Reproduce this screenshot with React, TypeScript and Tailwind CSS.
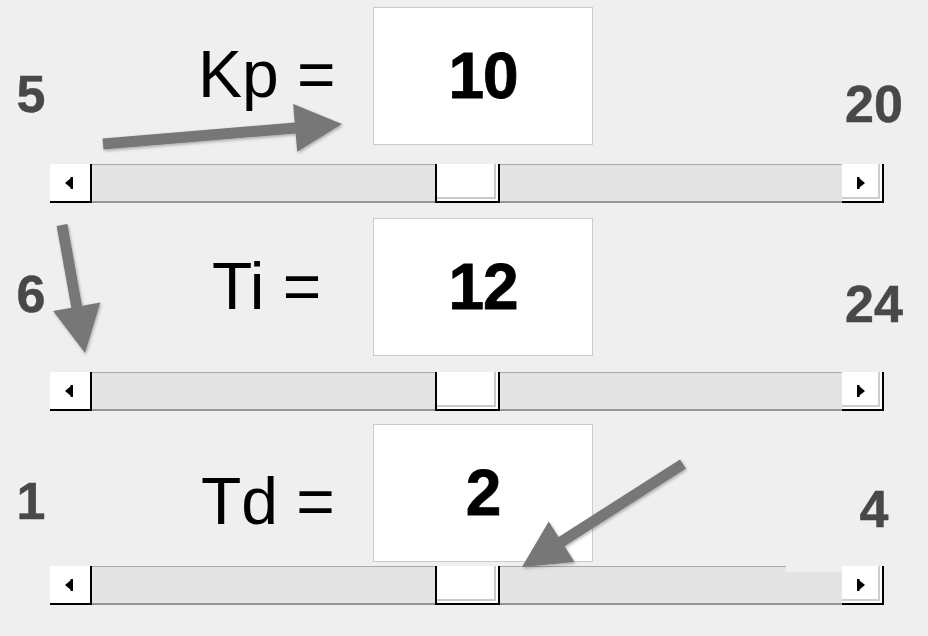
import React from "react";

// ─── Data ────────────────────────────────────────────────────────────────────

const ROWS = [
  {
    min: "5",
    max: "20",
    label: "Kp =",
    value: "10",
    rowCls: "pt-[7px]",
    labelCls: "mt-[34px] pl-[136px]",
    minCls: "mt-[61px]",
    maxCls: "mt-[71px]",
    sliderCls: "mt-[19px]",
    patch: false,
  },
  {
    min: "6",
    max: "24",
    label: "Ti =",
    value: "12",
    rowCls: "mt-[15px]",
    labelCls: "mt-[35px] pl-[150px]",
    minCls: "mt-[50px]",
    maxCls: "mt-[60px]",
    sliderCls: "mt-[16px]",
    patch: false,
  },
  {
    min: "1",
    max: "4",
    label: "Td =",
    value: "2",
    rowCls: "mt-[13px]",
    labelCls: "mt-[44px] pl-[139px]",
    minCls: "mt-[51px]",
    maxCls: "mt-[59px]",
    sliderCls: "mt-[4px]",
    patch: true,
  },
];

// annotation arrows: start point, tip point
const ARROWS = [
  { sx: 103, sy: 144, tx: 342, ty: 124 },
  { sx: 62, sy: 225, tx: 85, ty: 353 },
  { sx: 683, sy: 464, tx: 522, ty: 567 },
];

function arrowPoints(
  sx: number,
  sy: number,
  tx: number,
  ty: number,
  shaft = 11,
  headLen = 47,
  headHalf = 24
) {
  const len = Math.hypot(tx - sx, ty - sy);
  const ux = (tx - sx) / len;
  const uy = (ty - sy) / len;
  const nx = -uy;
  const ny = ux;
  const bx = tx - ux * headLen;
  const by = ty - uy * headLen;
  const w = shaft / 2;
  const pts = [
    [sx + nx * w, sy + ny * w],
    [bx + nx * w, by + ny * w],
    [bx + nx * headHalf, by + ny * headHalf],
    [tx, ty],
    [bx - nx * headHalf, by - ny * headHalf],
    [bx - nx * w, by - ny * w],
    [sx - nx * w, sy - ny * w],
  ];
  return pts.map((p) => `${p[0].toFixed(1)},${p[1].toFixed(1)}`).join(" ");
}

// ─── Slider atoms ────────────────────────────────────────────────────────────

function LeftTri() {
  return (
    <svg width="8" height="12" viewBox="0 0 8 12">
      <path d="M0 6 L6 1 L6 11 Z" fill="#000" />
      <rect x="5.5" y="0" width="2.5" height="12" fill="#000" />
    </svg>
  );
}

function RightTri() {
  return (
    <svg width="8" height="12" viewBox="0 0 8 12">
      <rect x="0" y="0" width="2.5" height="12" fill="#000" />
      <path d="M8 6 L2 1 L2 11 Z" fill="#000" />
    </svg>
  );
}

function ScrollSlider({ className, patch }: { className: string; patch: boolean }) {
  return (
    <div className={`flex h-[39px] w-[834px] ml-[50px] ${className}`}>
      <div className="w-[42px] shrink-0 bg-white border-r-2 border-b-2 border-black flex items-center justify-center pr-[3px]">
        <LeftTri />
      </div>
      <div className="relative flex flex-1">
        <div className="w-[343px] bg-[#e4e4e4] border-t border-t-[#a9a9a9] border-b-2 border-b-[#969696]" />
        <div className="w-[65px] bg-white border-x-2 border-b-2 border-black shadow-[inset_-2px_-2px_0_#fff,inset_-4px_-4px_0_#c9c9c9]" />
        <div className="flex-1 bg-[#e4e4e4] border-t border-t-[#a9a9a9] border-b-2 border-b-[#969696]" />
        {patch && (
          <div className="absolute top-0 left-[694px] w-[56px] h-[6px] bg-[#efefef]" />
        )}
      </div>
      <div className="w-[42px] shrink-0 bg-white border-r-2 border-b-2 border-black shadow-[inset_-2px_-2px_0_#fff,inset_-4px_-4px_0_#cdcdcd] flex items-center justify-center pr-[2px]">
        <RightTri />
      </div>
    </div>
  );
}

// ─── Row ─────────────────────────────────────────────────────────────────────

function ParamRow({ row }: { row: (typeof ROWS)[number] }) {
  return (
    <div className={row.rowCls}>
      <div className="flex items-start h-[138px]">
        <div
          className={`w-[62px] text-center text-[52px] font-bold leading-none text-[#484848] [-webkit-text-stroke:0.5px_#484848] ${row.minCls}`}
        >
          {row.min}
        </div>
        <div className={`w-[311px] text-[66px] leading-none text-black ${row.labelCls}`}>
          {row.label}
        </div>
        <div className="w-[220px] h-[138px] bg-white border border-[#cbcbcb] flex items-center justify-center">
          <span className="text-[64px] font-bold leading-none text-black tracking-[-1px] [-webkit-text-stroke:0.8px_#000]">
            {row.value}
          </span>
        </div>
        <div className="flex-1" />
        <div
          className={`w-[108px] text-center text-[52px] font-bold leading-none text-[#484848] [-webkit-text-stroke:0.5px_#484848] ${row.maxCls}`}
        >
          {row.max}
        </div>
      </div>
      <ScrollSlider className={row.sliderCls} patch={row.patch} />
    </div>
  );
}

export default function App() {
  return (
    <div className="relative w-[928px] h-[636px] overflow-hidden bg-[#efefef] font-['Liberation_Sans',Arial,sans-serif]">
      {ROWS.map((r) => (
        <ParamRow key={r.label} row={r} />
      ))}

      <svg
        className="absolute inset-0 pointer-events-none"
        width="928"
        height="636"
        viewBox="0 0 928 636"
      >
        <defs>
          <filter id="arrowShadow" x="-20%" y="-20%" width="140%" height="140%">
            <feDropShadow dx="1" dy="1.5" stdDeviation="1.5" floodColor="#000" floodOpacity="0.3" />
          </filter>
        </defs>
        {ARROWS.map((a, i) => (
          <polygon
            key={i}
            points={arrowPoints(a.sx, a.sy, a.tx, a.ty)}
            fill="#777777"
            filter="url(#arrowShadow)"
          />
        ))}
      </svg>
    </div>
  );
}
